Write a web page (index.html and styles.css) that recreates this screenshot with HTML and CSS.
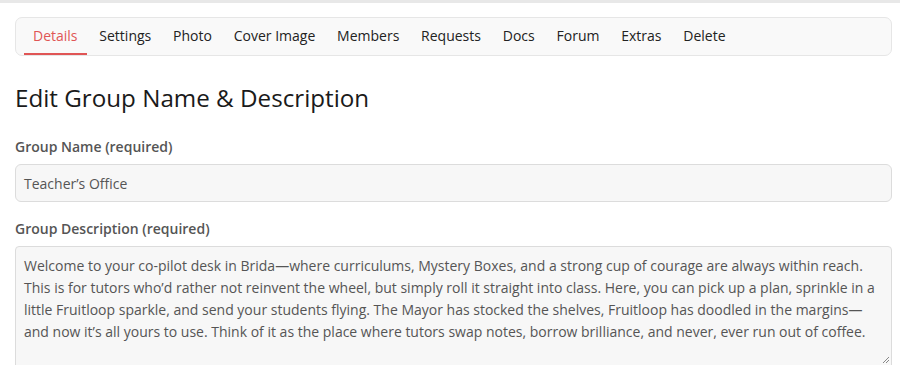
FILE: index.html
```html
<!DOCTYPE html>
<html>
<head>
<meta charset="utf-8">
<link rel="stylesheet" href="styles.css">
</head>
<body>
<div class="topbar"></div>
<div class="page">
  <nav class="tabs">
    <a class="tab active">Details</a>
    <a class="tab">Settings</a>
    <a class="tab">Photo</a>
    <a class="tab">Cover Image</a>
    <a class="tab">Members</a>
    <a class="tab">Requests</a>
    <a class="tab">Docs</a>
    <a class="tab">Forum</a>
    <a class="tab">Extras</a>
    <a class="tab">Delete</a>
  </nav>
  <h2 class="title">Edit Group Name &amp; Description</h2>
  <label class="label">Group Name (required)</label>
  <div class="input">Teacher’s Office</div>
  <label class="label">Group Description (required)</label>
  <div class="textarea">Welcome to your co-pilot desk in Brida—where curriculums, Mystery Boxes, and a strong cup of courage are always within reach. This is for tutors who’d rather not reinvent the wheel, but simply roll it straight into class. Here, you can pick up a plan, sprinkle in a little Fruitloop sparkle, and send your students flying. The Mayor has stocked the shelves, Fruitloop has doodled in the margins—and now it’s all yours to use. Think of it as the place where tutors swap notes, borrow brilliance, and never, ever run out of coffee.<svg class="grip" width="9" height="9" viewBox="0 0 9 9"><path d="M8 2L2 8M8 5L5 8" stroke="#888" stroke-width="1"/></svg></div>
</div>
</body>
</html>
```
FILE: styles.css
```css
* { box-sizing: border-box; }
html, body { margin: 0; padding: 0; background: #fff; }
body { font-family: "Open Sans", "Noto Sans", sans-serif; color: #222; overflow: hidden; height: 365px; }
.topbar { height: 3px; background: #e8e8e8; width: 900px; }
.page { padding: 14px 14px 0 15px; }
.tabs {
  display: flex;
  height: 39px;
  padding: 0 8px;
  background: #f9f9f9;
  border: 1px solid #e6e6e6;
  border-radius: 7px;
  align-items: stretch;
}
.tab {
  display: flex;
  align-items: center;
  padding: 0 9px;
  margin-right: 3.8px;
  font-size: 14px;
  color: #222;
  border-bottom: 2px solid transparent;
}
.tab.active { color: #e05555; border-bottom-color: #e05555; }
.title {
  margin: 26px 0 0;
  font-size: 24.2px;
  font-weight: 400;
  line-height: 32px;
  color: #1a1a1a;
}
.label {
  display: block;
  font-size: 14px;
  font-weight: 600;
  color: #555;
  line-height: 20px;
}
.title + .label { margin-top: 23px; }
.input {
  margin-top: 7px;
  height: 38px;
  border: 1px solid #dcdcdc;
  border-radius: 6px;
  background: #f7f7f7;
  padding: 0 8px;
  display: flex;
  align-items: center;
  font-size: 14px;
  color: #555;
}
.input + .label { margin-top: 17px; }
.textarea {
  position: relative;
  margin-top: 7px;
  height: 120px;
  border: 1px solid #dcdcdc;
  border-radius: 4px 4px 0 0;
  background: #f7f7f7;
  padding: 8px 8px;
  font-size: 14px;
  line-height: 22px;
  color: #555;
}
.grip { position: absolute; right: 1px; bottom: 1px; }
```
